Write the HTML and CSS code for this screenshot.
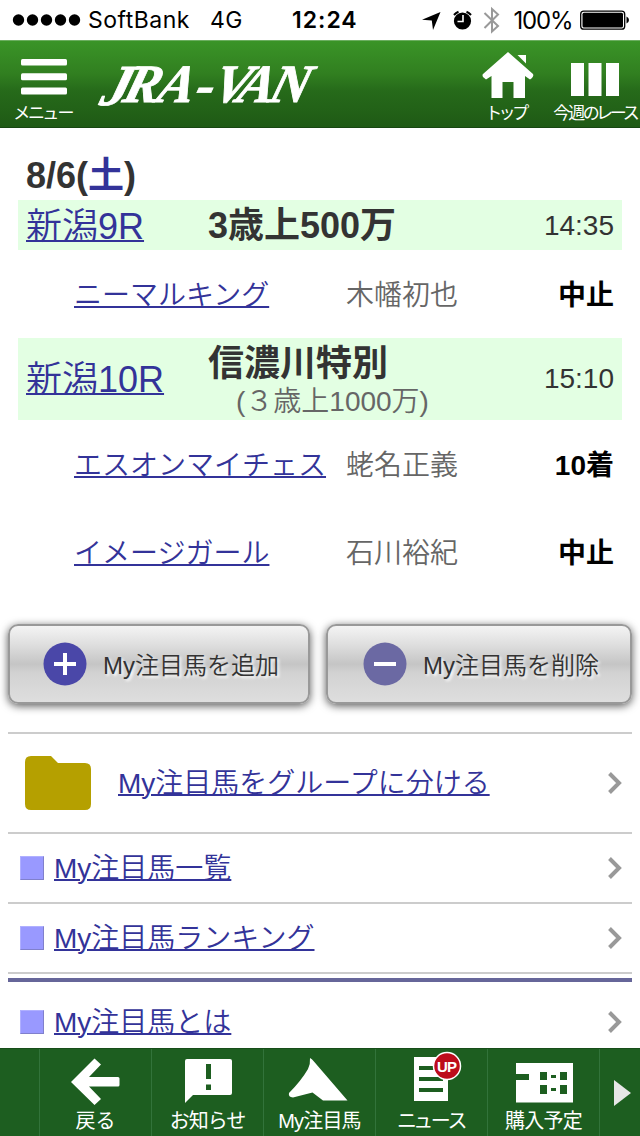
FILE: index.html
```html
<!DOCTYPE html>
<html lang="ja">

<head>
    <meta charset="utf-8">
    <meta name="viewport" content="width=device-width, initial-scale=1.0">
    <title>JRA-VAN My注目馬</title>
    <link rel="stylesheet" href="styles.css">
</head>

<body>
    <div class="status">
        <div class="status-left">
            <svg width="70" height="14" viewBox="0 0 70 14">
                <circle cx="6.500" cy="7" r="5.700"/><circle cx="20.500" cy="7" r="5.700"/><circle cx="34.500" cy="7" r="5.700"/><circle cx="48.500" cy="7" r="5.700"/><circle cx="62.500" cy="7" r="5.700"/>
            </svg>
            <span class="carrier">SoftBank</span>
            <span class="network">4G</span>
        </div>
        <span class="clock">12:24</span>
        <div class="status-right">
            <svg width="210" height="40" viewBox="420 0 210 40">
                <path d="M440.500 12 L433 30 L431.800 20.500 L422 19.800 Z"/>
                <circle cx="462.500" cy="21" r="8.600"/>
                <path d="M454 15 A11 11 0 0 1 458.500 11.800 M466.500 11.800 A11 11 0 0 1 471 15" fill="none" stroke="#000" stroke-width="2"/>
                <path d="M457.500 21.500 H463 V15" fill="none" stroke="#fff" stroke-width="1.600"/>
                <path d="M484.500 13 L498 26 L492 31.500 V9 L498 14.500 L484.500 28" fill="none" stroke="#999" stroke-width="2"/>
                <text class="percent" x="513.500" y="29" textLength="60">100%</text>
                <rect x="580.700" y="11.200" width="44" height="18" rx="3" fill="none" stroke="#000" stroke-width="1.300"/>
                <rect x="582.500" y="12.800" width="40.500" height="14.700" rx="1.500"/>
                <path d="M626.500 16.500 Q629 17.500 629 20 T626.500 23.500 Z"/>
            </svg>
        </div>
    </div>

    <div class="header">
        <a class="head-btn menu-btn">
            <svg width="46" height="36" viewBox="0 0 46 36" fill="#fff">
                <rect width="46" height="6.500" rx="1.500"/><rect y="14.300" width="46" height="7" rx="1.500"/><rect y="28.500" width="46" height="7" rx="1.500"/>
            </svg>
            <span class="head-label label-menu">メニュー</span>
        </a>
        <svg class="logo" width="230" height="86" viewBox="92 41 230 86">
            <g transform="translate(0 102) skewX(-16)">
                <text class="logo-j" x="99" y="3">J</text>
                <text x="121 155 193 210 235 267" y="0 0 1 0 0 0">RA-VAN</text>
            </g>
        </svg>
        <a class="head-btn top-btn">
            <svg width="52" height="47" viewBox="0 0 52 47" fill="#fff">
                <path d="M26 0 L51 22 Q52 24 50 26 L48 27.500 L43 24 V46 H31.500 V30 H20.500 V46 H9.500 V24 L4 27.500 L1 25 Q0 23 1 22 Z"/>
                <path d="M35.500 3 H44 V11.500 Z"/>
            </svg>
            <span class="head-label">トップ</span>
        </a>
        <a class="head-btn race-btn">
            <svg width="48" height="33" viewBox="0 0 48 33" fill="#fff">
                <rect width="13" height="33"/><rect x="17.500" width="13" height="33"/><rect x="35" width="13" height="33"/>
            </svg>
            <span class="head-label label-race">今週のレース</span>
        </a>
    </div>

    <div class="main">
        <div class="date">8/6(<span class="sat">土</span>)</div>
        <div class="race">
            <a class="race-no" href="#">新潟9R</a>
            <div class="race-name">3歳上500万</div>
            <span class="race-time">14:35</span>
        </div>
        <div class="horse">
            <a class="horse-name" href="#">ニーマルキング</a>
            <span class="jockey">木幡初也</span>
            <span class="result">中止</span>
        </div>
        <div class="race race-tall">
            <a class="race-no" href="#">新潟10R</a>
            <div class="race-name">信濃川特別<span class="race-class">(３歳上1000万)</span></div>
            <span class="race-time">15:10</span>
        </div>
        <div class="horse">
            <a class="horse-name" href="#">エスオンマイチェス</a>
            <span class="jockey">蛯名正義</span>
            <span class="result">10着</span>
        </div>
        <div class="horse">
            <a class="horse-name" href="#">イメージガール</a>
            <span class="jockey">石川裕紀</span>
            <span class="result">中止</span>
        </div>

        <div class="buttons">
            <a class="button button-add">
                <svg width="44" height="44" viewBox="0 0 44 44">
                    <circle cx="22" cy="22" r="21.500" fill="#4a47a8"/>
                    <path d="M11 22 H33 M22 11 V33" stroke="#fff" stroke-width="4"/>
                </svg>
                <span>My注目馬を追加</span>
            </a>
            <a class="button button-del">
                <svg width="44" height="44" viewBox="0 0 44 44">
                    <circle cx="22" cy="22" r="21.500" fill="#6b69a3"/>
                    <path d="M11 22 H33" stroke="#fff" stroke-width="4"/>
                </svg>
                <span>My注目馬を削除</span>
            </a>
        </div>

        <div class="list">
            <div class="item item-group">
                <svg class="folder" width="66" height="54" viewBox="0 0 66 54">
                    <path d="M6 0 H26 L33 7 H60 Q66 7 66 13 V48 Q66 54 60 54 H6 Q0 54 0 48 V6 Q0 0 6 0 Z" fill="#b5a000"/>
                </svg>
                <a href="#">My注目馬をグループに分ける</a>
                <svg class="arrow" width="14" height="22" viewBox="0 0 14 22"><path d="M1.500 1.500 L11 11 L1.500 20.500"/></svg>
            </div>
            <div class="item">
                <span class="square"></span>
                <a href="#">My注目馬一覧</a>
                <svg class="arrow" width="14" height="22" viewBox="0 0 14 22"><path d="M1.500 1.500 L11 11 L1.500 20.500"/></svg>
            </div>
            <div class="item">
                <span class="square"></span>
                <a href="#">My注目馬ランキング</a>
                <svg class="arrow" width="14" height="22" viewBox="0 0 14 22"><path d="M1.500 1.500 L11 11 L1.500 20.500"/></svg>
            </div>
        </div>
        <div class="item item-about">
            <span class="square"></span>
            <a href="#">My注目馬とは</a>
            <svg class="arrow" width="14" height="22" viewBox="0 0 14 22"><path d="M1.500 1.500 L11 11 L1.500 20.500"/></svg>
        </div>
    </div>

    <div class="footer">
        <div class="tab-edge"></div>
        <a class="tab">
            <svg width="112" height="56" viewBox="40 1048 112 56" fill="#fff">
                <path d="M71 1082 L94.500 1058.500 L101 1064.500 L89 1077 H118 Q119.500 1077 119.500 1078.500 V1085 Q119.500 1086.500 118 1086.500 H89 L101 1099 L94.500 1105 Z"/>
            </svg>
            <span>戻る</span>
        </a>
        <a class="tab tab-news">
            <svg width="112" height="56" viewBox="152 1048 112 56">
                <path d="M187 1059 H230 Q232 1059 232 1061 V1093 Q232 1095 230 1095 H193 L185 1103 V1061 Q185 1059 187 1059 Z" fill="#fff"/>
                <path d="M206 1064 H211 V1079 H206 Z M206 1084.500 H211 V1090 H206 Z" fill="#1d5e20"/>
            </svg>
            <span>お知らせ</span>
        </a>
        <a class="tab tab-my">
            <svg width="112" height="56" viewBox="264 1048 112 56" fill="#fff">
                <path d="M310 1058 Q312 1059 313.500 1061 L347.500 1100.500 H323 L312.500 1092.500 L293 1097.500 Q288 1097 289 1093 Q301 1081 308 1069 Q310.500 1064 310 1058 Z"/>
            </svg>
            <span>My注目馬</span>
        </a>
        <a class="tab tab-kana">
            <svg width="112" height="56" viewBox="376 1048 112 56">
                <path d="M414 1057 H448 V1101 H414 Z" fill="#fff"/>
                <path d="M419 1066 H436 V1070 H419 Z M419 1077 H443 V1081 H419 Z M419 1088 H443 V1092 H419 Z" fill="#1d5e20"/>
                <circle cx="447" cy="1066" r="13.500" fill="#bd0c1b" stroke="#fff" stroke-width="1.500"/>
                <text class="up" x="437" y="1071.500" textLength="20">UP</text>
            </svg>
            <span>ニュース</span>
        </a>
        <a class="tab tab-buy">
            <svg width="112" height="56" viewBox="488 1048 112 56">
                <path d="M516 1063 H573 V1102.500 H516 V1080 H529 V1074 H516 Z" fill="#fff"/>
                <path d="M540 1072 H547 V1080 H540 Z M551 1075 H556 V1078 H551 Z M560 1072 H567 V1080 H560 Z M540 1085 H547 V1094 H540 Z M551 1088 H556 V1091 H551 Z M560 1085 H567 V1094 H560 Z" fill="#1d5e20"/>
            </svg>
            <span>購入予定</span>
        </a>
        <div class="tab-next">
            <svg width="17" height="26" viewBox="0 0 17 26"><path d="M0 0 L17 13 L0 26 Z" fill="#e6e6e6"/></svg>
        </div>
    </div>
</body>

</html>
```
FILE: styles.css
```css
* {
    box-sizing: border-box;
}

body {
    margin: 0;
    width: 640px;
    height: 1136px;
    display: flex;
    flex-direction: column;
    overflow: hidden;
    background: #fff;
    color: #333;
    font-family: "Liberation Sans", "Noto Sans CJK JP", sans-serif;
    font-weight: 350;
    font-size: 28px;
}

svg {
    display: block;
    flex: none;
}

a {
    color: #333399;
    text-underline-offset: 1px;
    text-decoration-thickness: 2px;
    white-space: nowrap;
}

/* status bar */
.status {
    height: 40px;
    display: grid;
    grid-template-columns: 292px 128px 220px;
    align-items: center;
    font-family: Inter, "Liberation Sans", sans-serif;
    font-size: 23px;
    font-weight: 400;
    color: #000;
}

.status-left {
    display: flex;
    align-items: center;
    padding-left: 12px;
}

.carrier {
    margin-left: 6px;
    letter-spacing: 0.5px;
}

.network {
    margin-left: 20px;
    letter-spacing: 0.5px;
}

.clock {
    font-weight: 600;
    letter-spacing: 1px;
}

.percent {
    font-size: 24px;
}

/* header */
.header {
    height: 88px;
    display: flex;
    background: linear-gradient(#3a9427, #317f20 38%, #266a1a 58%, #1f5a15);
    border-top: 1px solid #6cae60;
    border-bottom: 1px solid #174712;
}

.head-btn {
    display: flex;
    flex-direction: column;
    align-items: center;
    justify-content: flex-end;
    padding-bottom: 2px;
}

.head-label {
    font-size: 17px;
    line-height: 22px;
    color: #fff;
    font-weight: 400;
    font-feature-settings: "palt";
    letter-spacing: -0.5px;
}

.menu-btn {
    width: 88px;
}

.menu-btn svg {
    margin-bottom: 8px;
}

.logo {
    margin-left: 4px;
    font-family: "Liberation Serif", serif;
    font-weight: bold;
    font-style: italic;
    font-size: 54px;
    fill: #fff;
    stroke: #fff;
    stroke-width: 0.8px;
}

.logo-j {
    font-size: 58px;
}

.top-btn {
    width: 72px;
    margin-left: 150px;
}

.top-btn svg {
    margin-bottom: 4px;
}

.race-btn {
    width: 96px;
    padding-left: 6px;
}

.race-btn svg {
    margin-bottom: 7px;
}

.label-race {
    letter-spacing: -2.2px;
}

/* race list */
.main {
    flex: 1;
    min-height: 0;
    overflow: hidden;
    padding: 24px 8px 0;
}

.date {
    height: 48px;
    line-height: 48px;
    padding-left: 18px;
    font-size: 36px;
    font-weight: bold;
}

.sat {
    color: #333399;
}

.race {
    height: 50px;
    margin: 0 10px;
    padding: 0 8px;
    display: grid;
    grid-template-columns: 182px 1fr 80px;
    align-items: center;
    background: #e3ffe3;
}

.race-tall {
    height: 82px;
}

.race-no {
    padding-top: 2px;
    font-size: 36px;
    line-height: 50px;
}

.race-name {
    font-size: 36px;
    line-height: 50px;
    font-weight: bold;
}

.race-class {
    display: block;
    margin-top: -2px;
    padding: 0 0 2px 28px;
    font-size: 28px;
    line-height: 30px;
    font-weight: 350;
    color: #666;
}

.race-time {
    text-align: right;
}

.horse {
    height: 88px;
    padding: 0 18px 3px 66px;
    display: grid;
    grid-template-columns: 272px 1fr auto;
    align-items: center;
}

.jockey {
    color: #666;
}

.result {
    color: #000;
    font-weight: bold;
}

/* add / remove buttons */
.buttons {
    display: flex;
    gap: 16px;
    margin-top: 28px;
}

.button {
    height: 80px;
    display: flex;
    align-items: center;
    gap: 16px;
    padding-left: 33px;
    border: 2px solid #999;
    border-radius: 10px;
    background: linear-gradient(#f4f4f4, #dedede 25%, #c5c5c5 50%, #d2d2d2 62%, #dedede);
    box-shadow: 0 2px 8px rgba(0, 0, 0, 0.65);
    color: #333;
    font-size: 24px;
    text-shadow: 2px 2px 3px #fff;
}

.button span {
    padding-bottom: 2px;
}

.button-add {
    width: 302px;
}

.button-del {
    width: 306px;
    padding-left: 35px;
}

/* link list */
.list {
    margin-top: 28px;
    border-top: 2px solid #ccc;
}

.item {
    height: 70px;
    display: flex;
    align-items: center;
    padding: 0 10px 0 12px;
    border-bottom: 2px solid #ccc;
}

.item a {
    padding-bottom: 4px;
}

.item-group {
    height: 100px;
    padding-left: 17px;
}

.folder {
    margin-right: 27px;
}

.square {
    width: 24px;
    height: 24px;
    margin-right: 10px;
    background: #9999ff;
    border: 1px solid;
    border-color: #b0b0ff #8080cc #8080cc #b0b0ff;
}

.arrow {
    margin-left: auto;
    fill: none;
    stroke: #999;
    stroke-width: 4;
}

.item-about {
    height: 84px;
    margin-top: 4px;
    border-top: 4px solid #666699;
    border-bottom: none;
}

/* bottom tabs */
.footer {
    height: 88px;
    display: flex;
    background: #1d5e20;
    border-top: 1px solid #174d1a;
}

.tab-edge {
    width: 39px;
}

.tab {
    width: 112px;
    display: flex;
    flex-direction: column;
    align-items: center;
    border-left: 1px solid #32733a;
    color: #fff;
    font-size: 20px;
    line-height: 32px;
    font-weight: 400;
}

.tab svg {
    margin: -1px 0 1px;
    overflow: visible;
}

.tab-news {
    letter-spacing: -1px;
}

.tab-my {
    letter-spacing: -0.8px;
}

.tab-kana {
    font-feature-settings: "palt";
    letter-spacing: -1px;
}

.tab-buy {
    letter-spacing: -0.8px;
}

.up {
    font-family: "Liberation Sans", sans-serif;
    font-size: 15px;
    font-weight: bold;
    letter-spacing: 0;
    fill: #fff;
}

.tab-next {
    flex: 1;
    display: flex;
    align-items: center;
    padding-left: 14px;
    border-left: 1px solid #32733a;
}
```
